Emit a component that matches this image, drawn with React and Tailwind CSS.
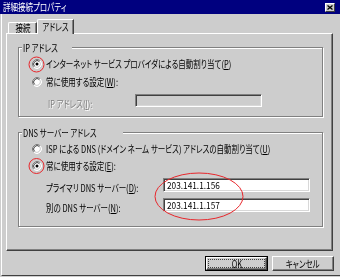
import React from "react";

function T({ children, className = "" }) {
  return (
    <span className={"inline-block origin-left scale-x-[0.75] whitespace-nowrap leading-none [font-feature-settings:'palt'] " + className}>
      {children}
    </span>
  );
}

function TC({ children, className = "" }) {
  return (
    <span className={"inline-block origin-center scale-x-[0.75] whitespace-nowrap leading-none [font-feature-settings:'palt'] " + className}>
      {children}
    </span>
  );
}

function Radio({ checked }) {
  return (
    <svg width="10" height="10" viewBox="0 0 10 10" className="shrink-0">
      <circle cx="5" cy="5" r="4" fill="#fff" />
      <path d="M1.82 8.18 A4.5 4.5 0 0 1 8.18 1.82" stroke="#808080" fill="none" />
      <path d="M8.18 1.82 A4.5 4.5 0 0 1 1.82 8.18" stroke="#fff" fill="none" />
      <path d="M2.53 7.47 A3.5 3.5 0 0 1 7.47 2.53" stroke="#404040" fill="none" />
      <path d="M7.47 2.53 A3.5 3.5 0 0 1 2.53 7.47" stroke="#cdcdcd" fill="none" />
      {checked && <circle cx="5" cy="5" r="1.5" fill="#000" />}
    </svg>
  );
}

function RadioRow({ checked, children }) {
  return (
    <div className="flex items-center h-[12px] gap-[4px]">
      <Radio checked={checked} />
      <T className="text-[10px]">{children}</T>
    </div>
  );
}

function Group({ label, className = "", children }) {
  return (
    <div className={"relative w-[305px] border border-[#808080] shadow-[inset_1px_1px_0_#fff,1px_1px_0_#fff] " + className}>
      <div className="absolute left-[3px] -top-[6px] bg-[#cdcdcd] pl-[1px] pr-[2px] h-[11px] flex items-center">
        <T className="text-[10px]">{label}</T>
      </div>
      {children}
    </div>
  );
}

function Sunken({ className = "", children }) {
  return (
    <div className={"border border-t-[#808080] border-l-[#808080] border-r-white border-b-white shadow-[inset_1px_1px_0_#404040,inset_-1px_-1px_0_#d8d8d8] flex items-center " + className}>
      {children}
    </div>
  );
}

export default function App() {
  return (
    <div className="relative w-[340px] h-[277px] bg-[#cdcdcd] overflow-hidden font-['Noto_Sans_CJK_JP',sans-serif] text-black flex flex-col pb-[1px]">
      {/* Title bar */}
      <div className="h-[14px] shrink-0 bg-[#00007f] flex items-center justify-between pl-[3px] pr-[5px]">
        <T className="text-[10px] text-white">詳細接続プロパティ</T>
        <div className="w-[10px] h-[9px] bg-[#cdcdcd] border border-t-white border-l-white border-r-[#404040] border-b-[#404040] flex items-center justify-center">
          <svg width="6" height="5" viewBox="0 0 6 5">
            <path d="M0.5 0.5 L5.5 4.5 M5.5 0.5 L0.5 4.5" stroke="#000" strokeWidth="1.3" />
          </svg>
        </div>
      </div>

      {/* Body */}
      <div className="flex-1 flex flex-col ml-[1px] border-l border-white border-b border-b-[#404040]">
        {/* Tabs */}
        <div className="flex items-end h-[14px] mt-[5px] ml-[6px]">
          <div className="w-[29px] h-[11px] border-t border-l border-white border-r border-r-[#404040] shadow-[inset_-1px_0_0_#808080] rounded-tl-[2px] flex items-center justify-center">
            <TC className="text-[10px]">接続</TC>
          </div>
          <div className="relative z-10 w-[37px] h-[15px] -mb-px bg-[#cdcdcd] border-t border-l border-white border-r border-r-[#404040] shadow-[inset_-1px_0_0_#808080] rounded-tl-[2px] flex items-center justify-center pb-[1px]">
            <TC className="text-[10px]">アドレス</TC>
          </div>
        </div>

        {/* Panel */}
        <div className="ml-[4px] w-[327px] h-[218px] border-t border-l border-white border-r border-b border-r-[#404040] border-b-[#404040] shadow-[inset_-1px_-1px_0_#808080] pt-[13px] pl-[11px] flex flex-col">
          <Group label="IP アドレス" className="h-[70px]">
            <div className="flex flex-col pt-[10px] pl-[13px] gap-[6px]">
              <RadioRow checked>
                インターネット サービス プロバイダによる自動割り当て(<u>P</u>)
              </RadioRow>
              <RadioRow>
                常に使用する設定(<u>W</u>):
              </RadioRow>
              <div className="flex items-center h-[13px] pl-[16px]">
                <div className="w-[87px] shrink-0">
                  <T className="text-[10px] text-[#808080] [text-shadow:1px_1px_0_#fff]">IP アドレス(<u>I</u>):</T>
                </div>
                <Sunken className="w-[127px] h-[13px] bg-[#cdcdcd]" />
              </div>
            </div>
          </Group>

          <Group label="DNS サーバー アドレス" className="h-[95px] mt-[15px]">
            <div className="flex flex-col pt-[10px] pl-[13px]">
              <RadioRow>
                ISP による DNS (ドメイン ネーム サービス) アドレスの自動割り当て(<u>U</u>)
              </RadioRow>
              <div className="mt-[5px]">
                <RadioRow checked>
                  常に使用する設定(<u>E</u>):
                </RadioRow>
              </div>
              <div className="flex items-center h-[14px] pl-[14px] mt-[6px]">
                <div className="w-[117px] shrink-0">
                  <T className="text-[10px]">プライマリ DNS サーバー(<u>D</u>):</T>
                </div>
                <Sunken className="w-[147px] h-[14px] bg-white pl-[3px]">
                  <span className="text-[9px] leading-none whitespace-nowrap inline-block origin-left scale-x-[0.92]">203.141.1.156</span>
                </Sunken>
              </div>
              <div className="flex items-center h-[14px] pl-[14px] mt-[6px]">
                <div className="w-[117px] shrink-0">
                  <T className="text-[10px]">別の DNS サーバー(<u>N</u>):</T>
                </div>
                <Sunken className="w-[147px] h-[14px] bg-white pl-[3px]">
                  <span className="text-[9px] leading-none whitespace-nowrap inline-block origin-left scale-x-[0.92]">203.141.1.157</span>
                </Sunken>
              </div>
            </div>
          </Group>
        </div>

        {/* Buttons */}
        <div className="flex justify-end gap-[4px] mt-[5px] pr-[6px]">
          <div className="w-[63px] h-[15px] border border-black">
            <div className="w-full h-full border border-t-white border-l-white border-r-[#404040] border-b-[#404040] shadow-[inset_-1px_-1px_0_#808080] p-[1px]">
              <div className="w-full h-full border border-dotted border-[#404040] flex items-center justify-center">
                <TC className="text-[10px]">OK</TC>
              </div>
            </div>
          </div>
          <div className="w-[62px] h-[15px] border border-t-white border-l-white border-r-[#404040] border-b-[#404040] shadow-[inset_-1px_-1px_0_#808080] flex items-center justify-center">
            <TC className="text-[10px]">キャンセル</TC>
          </div>
        </div>
      </div>

      {/* Red annotations */}
      <svg className="absolute inset-0 pointer-events-none" width="340" height="277" viewBox="0 0 340 277">
        <circle cx="36.5" cy="64.5" r="7.5" fill="none" stroke="#e8262b" strokeWidth="1" />
        <circle cx="36.5" cy="166" r="7.5" fill="none" stroke="#e8262b" strokeWidth="1" />
        <ellipse cx="199" cy="196.5" rx="44" ry="23.5" fill="none" stroke="#e8262b" strokeWidth="1" />
      </svg>
    </div>
  );
}
